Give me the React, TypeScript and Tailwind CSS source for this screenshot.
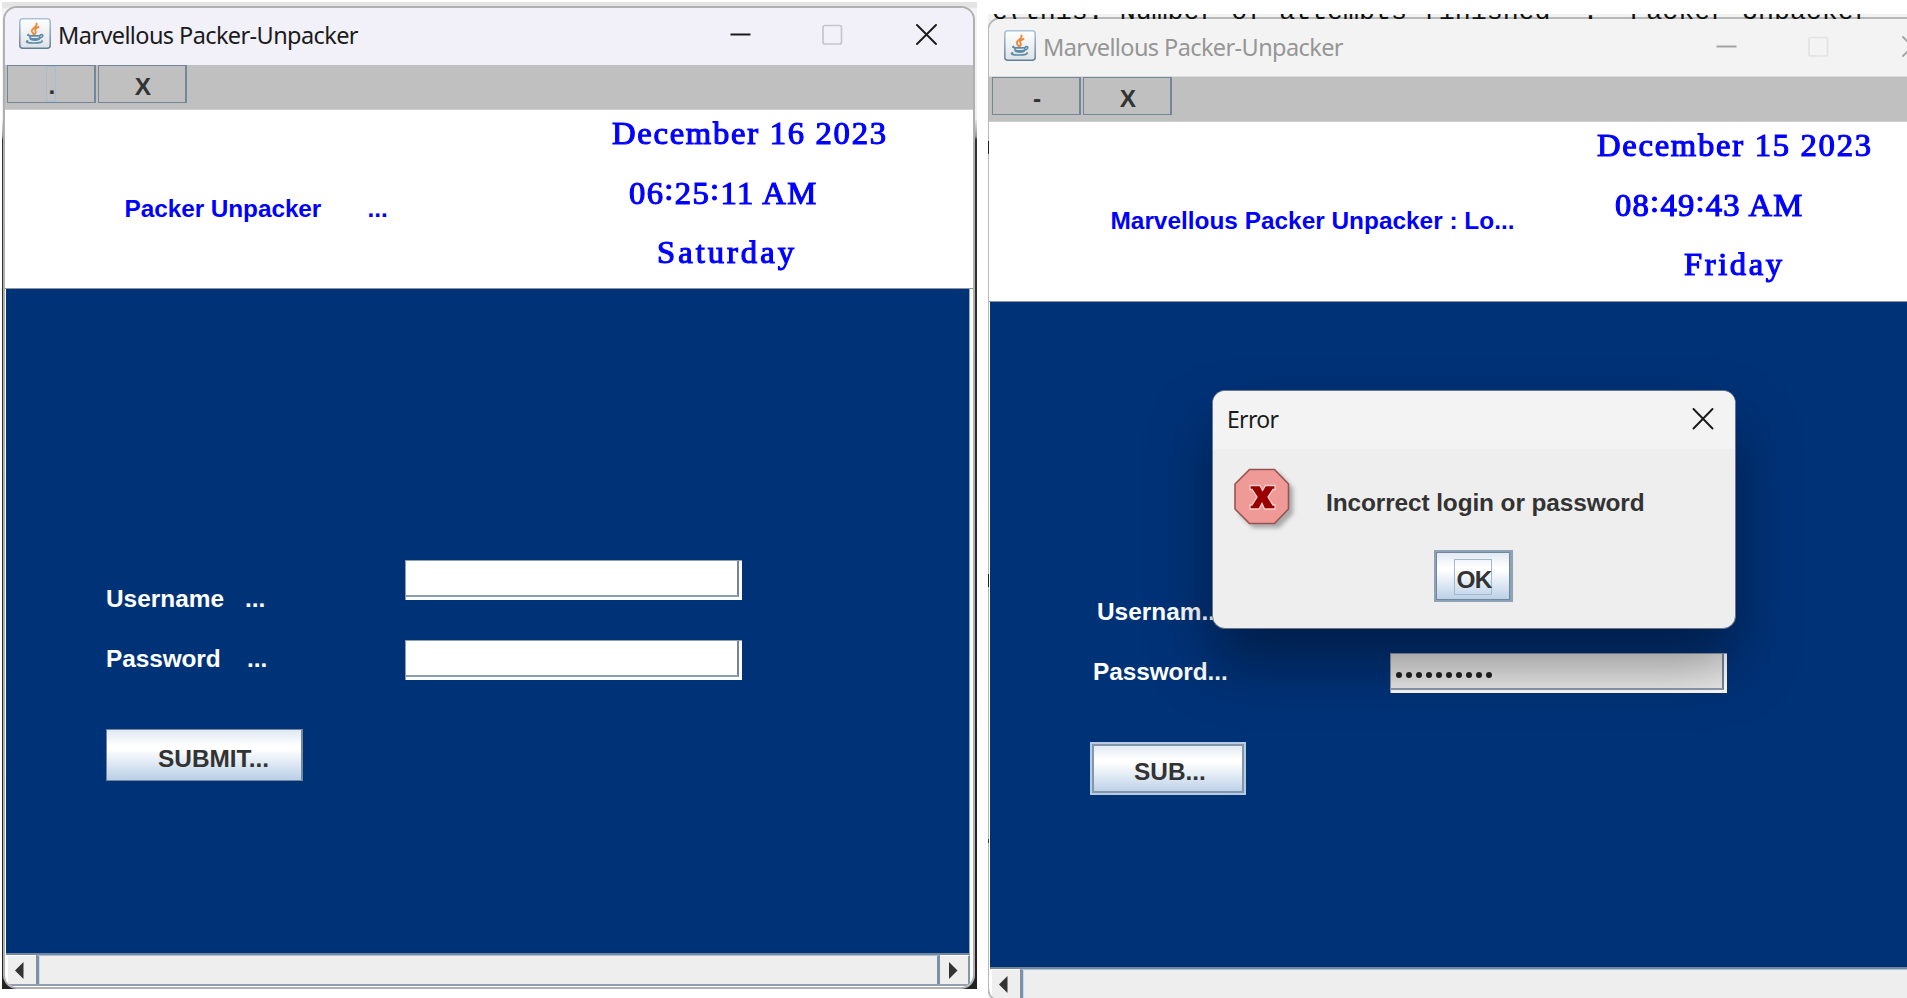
import React from "react";

const sans = "font-['Liberation_Sans',Arial,sans-serif] text-[24.4px] leading-[28px] font-bold whitespace-pre";
const ui = "font-['Noto_Sans',sans-serif] whitespace-pre";

function JavaIcon() {
  return (
    <svg width="32" height="31" viewBox="0 0 32 31" fill="none" className="shrink-0">
      <defs>
        <linearGradient id="tile" x1="0" y1="0" x2="0" y2="1">
          <stop offset="0" stopColor="#ffffff" />
          <stop offset="1" stopColor="#dfe2e5" />
        </linearGradient>
        <linearGradient id="edge" x1="0" y1="0" x2="0" y2="1">
          <stop offset="0" stopColor="#a9c3d6" />
          <stop offset="1" stopColor="#5f7f97" />
        </linearGradient>
      </defs>
      <rect x="0.8" y="0.8" width="30.4" height="29.4" rx="3" fill="url(#tile)" stroke="url(#edge)" strokeWidth="1.5" />
      <path d="M17.5 5.5c1.5 3-5 4.800-4.800 7.500.1 1.300 1.600 2 1.800 3.300M19.500 9c-2.800 1.100-4 2.400-3 4.200.6 1 .4 1.800-.6 2.800" stroke="#ee8a3c" strokeWidth="1.900" strokeLinecap="round" />
      <path d="M9.500 16.500c-2 .8 0 1.400 5.500 1.400s6.500-.7 7-1.100M10.500 17.500l1 3.700c2.500 1 6.500 1 8.500 0l.8-2.500M11.500 20.200c2.500.8 6 .8 8.500 0M22 16.500c2.600-.3 2.500 3-1.200 3.600" stroke="#5b8cab" strokeWidth="1.700" strokeLinecap="round" />
      <path d="M8.500 22.800c-2.500 1.200 0 2.200 6.500 2.200s8.500-1 8-2" stroke="#5b8cab" strokeWidth="1.700" strokeLinecap="round" />
    </svg>
  );
}

function TitleButtons({ active }: { active: boolean }) {
  const c = active ? "#1a1a1a" : "#a3a3a3";
  const m = active ? "#c6c5cc" : "#e2e2e2";
  return (
    <svg width="208" height="22" viewBox="0 0 208 22" fill="none" className="shrink-0">
      <path d="M0.500 10.500H20.500" stroke={c} strokeWidth="1.800" />
      <rect x="93" y="1.500" width="18.500" height="18.500" rx="2" stroke={m} strokeWidth="1.700" />
      <path d="M187 1l19 19M206 1l-19 19" stroke={c} strokeWidth="1.900" strokeLinecap="round" />
    </svg>
  );
}

function ToolButton({ label, focused }: { label: string; focused?: boolean }) {
  return (
    <div className="flex h-[38px] w-[89px] justify-center border border-r-2 border-[#74879a] bg-[#c0c0c0]">
      <div
        className={
          focused
            ? "flex h-[36px] w-[10px] justify-center border border-[#a3bfd8]"
            : "flex h-[36px] w-[30px] justify-center"
        }
      >
        <span className={`${sans} pt-[7px] pl-[2px] text-[#333] ${focused ? "-mt-[2px]" : ""}`}>{label}</span>
      </div>
    </div>
  );
}

function Field({ shaded, children }: { shaded?: boolean; children?: React.ReactNode }) {
  return (
    <div className="h-[40px] w-[337px] border-t border-l border-[#8f9dab] bg-white pr-[3px] pb-[3px]">
      <div
        className={`flex h-full w-full items-center border-r-2 border-b-2 border-r-[#74879a] border-b-[#8d9caf] ${
          shaded ? "bg-[linear-gradient(#e2e2e2,#ebebeb)]" : "bg-white"
        }`}
      >
        {children}
      </div>
    </div>
  );
}

function DateText({ className, children }: { className: string; children: React.ReactNode }) {
  return (
    <div
      className={`h-[59.5px] shrink-0 origin-left scale-x-[1.07] font-['Liberation_Serif',serif] text-[30.500px] leading-[36px] whitespace-pre text-[#0000ff] [-webkit-text-stroke:1.1px_#0000ff] ${className}`}
    >
      {children}
    </div>
  );
}

function Colon() {
  return <span className="relative -top-[4px]">:</span>;
}

function ScrollBar() {
  return (
    <div className="flex h-[31px] w-[964px] border-b-2 border-[#8fa0b2] bg-[#eee]">
      <div className="flex w-[30px] items-center border-t border-l-2 border-white pl-[7px]">
        <svg width="9" height="17" viewBox="0 0 9 17"><path d="M0 8.500L8.500 0v17z" fill="#333" /></svg>
      </div>
      <div className="w-[904px] border-x-[3px] border-t border-x-[#7d90a4] border-t-[#a9c0d6] shadow-[inset_1px_0_0_#c8dbee]" />
      <div className="flex w-[30px] items-center border-t border-r-2 border-t-white border-r-[#8397ab] pl-[9px]">
        <svg width="9" height="17" viewBox="0 0 9 17"><path d="M8.500 8.500L0 0v17z" fill="#333" /></svg>
      </div>
    </div>
  );
}

const steel = "bg-[linear-gradient(#dfe8f3_0%,#ffffff_32%,#ffffff_38%,#b9cfe6_100%)]";

function LeftWindow() {
  return (
    <div className="absolute top-[4px] left-[1px] flex h-[983px] w-[972px] flex-col overflow-hidden rounded-[14px] border-2 border-[#b0b0b0] bg-white">
      <div className="flex h-[57px] shrink-0 bg-[#f2f1f9] pt-[10px] pl-[14px]">
        <JavaIcon />
        <span className={`${ui} w-[680px] pl-[7px] text-[23.500px] leading-[34px] tracking-[-0.600px] text-[#1b1b1b]`}>
          Marvellous Packer-Unpacker
        </span>
        <div className="-ml-[7px] pt-[6px] pl-[6px]"><TitleButtons active /></div>
      </div>
      <div className="flex h-[45px] shrink-0 gap-[2px] border-b border-[#cfcfcf] bg-[#c0c0c0] pl-[2px]">
        <ToolButton label="." focused />
        <ToolButton label="X" />
      </div>
      <div className="flex h-[179px] shrink-0 border-b border-[#8a97a3] bg-white">
        <div className={`${sans} flex w-[607px] pt-[85px] pl-[119.5px] text-[#0000ff]`}>
          <span className="w-[243px] tracking-[-0.080px]">Packer Unpacker</span>
          <span>...</span>
        </div>
        <div className="flex flex-col pt-[6px]">
          <DateText className="tracking-[1.600px]">December 16 2023</DateText>
          <DateText className="ml-[17px] tracking-[1.250px]">06<Colon />25<Colon />11 AM</DateText>
          <DateText className="ml-[45px] tracking-[2.800px]">Saturday</DateText>
        </div>
      </div>
      <div className="ml-px flex h-[666px] w-[964px] shrink-0 flex-col border-r border-b-2 border-r-[#9aabbd] border-b-[#75879a] bg-[#003278] pt-[271px] pl-[100px]">
        <div className={`${sans} flex h-[80px] text-white`}>
          <span className="w-[139px] pt-[25px]">Username</span>
          <span className="w-[160px] pt-[25px]">...</span>
          <Field />
        </div>
        <div className={`${sans} flex h-[89px] text-white`}>
          <span className="w-[141px] pt-[5px] tracking-[-0.080px]">Password</span>
          <span className="w-[158px] pt-[5px]">...</span>
          <Field />
        </div>
        <div className={`h-[52px] w-[197px] border border-r-2 border-[#74879a] pt-[15px] pl-[51px] ${sans} ${steel} text-[#333]`}>
          SUBMIT...
        </div>
      </div>
      <div className="ml-px"><ScrollBar /></div>
    </div>
  );
}

function RightWindow() {
  return (
    <div className="absolute top-[3px] -left-px flex h-[985px] w-[972px] flex-col overflow-hidden rounded-[14px] border-2 border-[#b8b8b8] bg-white">
      <div className="flex h-[58px] shrink-0 border-b border-[#dcdcdc] bg-[#f3f3f3] pt-[11px] pl-[15px]">
        <JavaIcon />
        <span className={`${ui} w-[680px] pl-[7px] text-[23.500px] leading-[34px] tracking-[-0.600px] text-[#969696]`}>
          Marvellous Packer-Unpacker
        </span>
        <div className="-ml-[6px] pt-[6px] pl-[6px]"><TitleButtons active={false} /></div>
      </div>
      <div className="flex h-[45px] shrink-0 gap-[2px] border-b border-[#cfcfcf] bg-[#c0c0c0] pl-[3px]">
        <ToolButton label="-" />
        <ToolButton label="X" />
      </div>
      <div className="flex h-[180px] shrink-0 border-b border-[#8a97a3] bg-white">
        <div className={`${sans} w-[608px] pt-[85px] pl-[121.5px] text-[#0000ff]`}>Marvellous Packer Unpacker : Lo...</div>
        <div className="flex flex-col pt-[6px]">
          <DateText className="tracking-[1.600px]">December 15 2023</DateText>
          <DateText className="ml-[18px] tracking-[1.150px]">08<Colon />49<Colon />43 AM</DateText>
          <DateText className="ml-[87px] tracking-[2.400px]">Friday</DateText>
        </div>
      </div>
      <div className="ml-px flex h-[667px] w-[964px] shrink-0 flex-col border-b-2 border-[#75879a] bg-[#003278] pt-[271px] pl-[100px]">
        <div className={`${sans} flex h-[80px] text-white`}>
          <span className="w-[300px] pt-[25px] pl-[7px]">Usernam...</span>
          <Field />
        </div>
        <div className={`${sans} flex h-[89px] text-white`}>
          <span className="w-[300px] pt-[5px] pl-[3px] tracking-[-0.080px]">Password...</span>
          <Field shaded>
            <div className="flex gap-[4px] pt-[7px] pl-[5px]">
              {Array.from({ length: 10 }, (_, i) => (
                <i key={i} className="h-[6px] w-[6px] rounded-full bg-[#222]" />
              ))}
            </div>
          </Field>
        </div>
        <div className={`h-[53px] w-[156px] border-2 border-[#b5cce2] ${steel}`}>
          <div className={`h-full w-full border-2 border-[#8297ac] pt-[12px] pl-[40px] ${sans} text-[#333]`}>SUB...</div>
        </div>
      </div>
      <div className="ml-px"><ScrollBar /></div>
    </div>
  );
}

function ErrorDialog() {
  return (
    <div className="absolute top-[376px] left-[224px] flex h-[239px] w-[524px] flex-col overflow-hidden rounded-[13px] border border-[#6a7687] bg-[#eee]">
      <div className="flex h-[58px] justify-between bg-[#f3f3f3] pt-[11px] pr-[21px] pl-[14px]">
        <span className={`${ui} text-[23px] leading-[34px] tracking-[-0.700px] text-[#1b1b1b]`}>Error</span>
        <svg width="22" height="22" viewBox="0 0 22 22" fill="none" className="mt-[6px]">
          <path d="M1.500 1l19 19.500M20.500 1l-19 19.500" stroke="#1a1a1a" strokeWidth="1.900" strokeLinecap="round" />
        </svg>
      </div>
      <div className="flex h-[101px] pt-[19px] pl-[20px]">
        <svg width="66" height="66" viewBox="0 0 66 66" fill="none" className="shrink-0">
          <defs>
            <filter id="soft" x="-20%" y="-20%" width="140%" height="140%"><feGaussianBlur stdDeviation="2.200" /></filter>
          </defs>
          <path d="M20 5h26l14 15v26L46 60H20L6 46V20z" fill="#8c8c8c" opacity="0.700" filter="url(#soft)" />
          <path d="M16.500 1.500h25L55.500 16v25L41.500 55.500h-25L2 41V16z" fill="#f09a98" stroke="#96534f" strokeWidth="1.600" />
          <path d="M17 17.500h10l2.500 5 3-5h9.500v4h-2l-5 7.500 5 8h2v4H31.500l-2.500-5.500-3 5.500H17v-4h2l5-8-5-7.500h-2z" fill="#990000" stroke="#fbd0ce" strokeWidth="1.300" />
        </svg>
        <span className={`${sans} pt-[21px] pl-[27px] tracking-[-0.100px] text-[#333]`}>Incorrect login or password</span>
      </div>
      <div className={`ml-[221px] h-[52px] w-[79px] border-2 border-r-[3px] border-[#8ba2b9] ${steel}`}>
        <div className="flex h-full w-full border border-[#74879a] pt-[6px] pl-[17px]">
          <div className={`h-[36px] w-[38px] border border-[#a3b8cc] pt-[6px] pl-[1.5px] ${sans} tracking-[-0.600px] text-[#333]`}>OK</div>
        </div>
      </div>
    </div>
  );
}

export default function App() {
  return (
    <div className="relative h-[998px] w-[1907px] overflow-hidden bg-white">
      <div className="absolute top-[2px] left-[2px] h-[987px] w-[975px] overflow-hidden bg-[linear-gradient(#e4e4e4_0px,#e4e4e4_5px,#f4f4f4_7px,#f0f0f0_116px,#999_134px,#333_138px,#222_100%)]">
        <LeftWindow />
      </div>
      <div className="absolute top-[14px] left-[988px] h-[984px] w-[919px] overflow-hidden bg-[#f2f2f2]">
        <RightWindow />
        <div className="absolute top-0 left-0 h-[5px] w-full overflow-hidden">
          <div className="-mt-[17px] -ml-[12px] font-['Liberation_Mono',monospace] text-[26.600px] leading-[30px] whitespace-pre text-[#111]">
            {"ve(this. Number of attempts finished  .  Packer Unpacker"}
          </div>
        </div>
        <div className="absolute top-[127px] left-0 h-[13px] w-px bg-[#222]" />
        <div className="absolute top-[560px] left-0 h-[13px] w-px bg-[#222]" />
        <div className="absolute top-[825px] left-0 h-[4px] w-px bg-[#442]" />
        {/* Drop shadow falls on the parent window only, below its header */}
        <div className="absolute top-[288px] left-[2px] h-[664px] w-[917px] overflow-hidden">
          <div className="absolute top-[88px] left-[222px] h-[239px] w-[524px] rounded-[13px] shadow-[0_34px_62px_0px_rgba(0,0,0,0.400)]" />
        </div>
        <ErrorDialog />
      </div>
    </div>
  );
}
